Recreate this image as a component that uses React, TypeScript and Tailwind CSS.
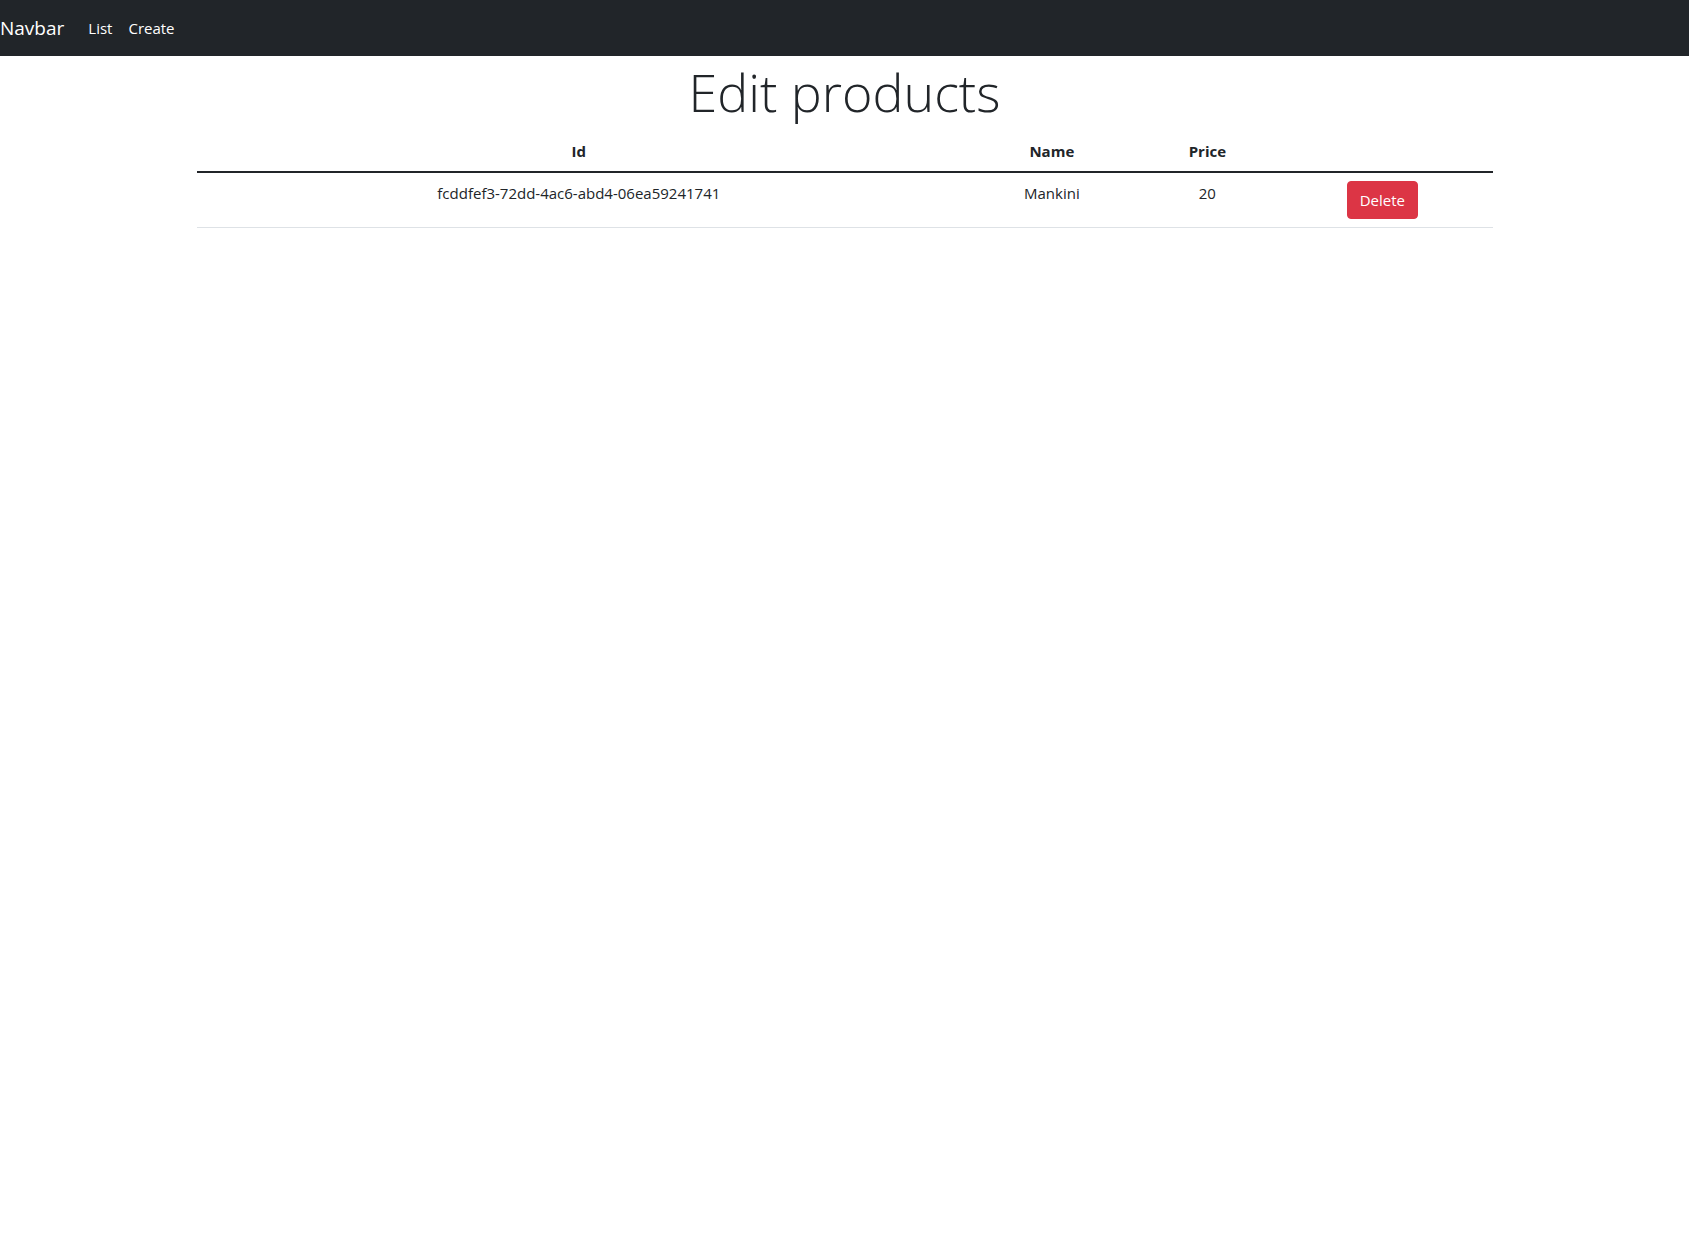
const products = [
  { id: "fcddfef3-72dd-4ac6-abd4-06ea59241741", name: "Mankini", price: 20 },
];

function Navbar() {
  return (
    <nav className="flex h-14 items-center bg-[#212529] text-white">
      <a href="#" className="mr-4 text-[19px] leading-[30px]">
        Navbar
      </a>
      <ul className="flex text-[15px] leading-6">
        <li>
          <a href="#list" className="block p-2">
            List
          </a>
        </li>
        <li>
          <a href="#create" className="block p-2">
            Create
          </a>
        </li>
      </ul>
    </nav>
  );
}

function ProductTable() {
  return (
    <table className="w-full table-fixed border-separate border-spacing-0 text-center align-top text-[15px] leading-6">
      <thead>
        <tr>
          <th className="w-[59%] border-b-2 border-[#212529] p-2">Id</th>
          <th className="w-[14%] border-b-2 border-[#212529] p-2">Name</th>
          <th className="w-[10%] border-b-2 border-[#212529] p-2">Price</th>
          <th className="w-[17%] border-b-2 border-[#212529] p-2" aria-label="Actions" />
        </tr>
      </thead>
      <tbody>
        {products.map((product) => (
          <tr key={product.id} className="align-top">
            <td className="border-b border-[#dee2e6] p-2">{product.id}</td>
            <td className="border-b border-[#dee2e6] p-2">{product.name}</td>
            <td className="border-b border-[#dee2e6] p-2">{product.price}</td>
            <td className="border-b border-[#dee2e6] p-2">
              <button
                type="button"
                className="block mx-auto rounded border border-[#dc3545] bg-[#dc3545] px-3 py-1.5 text-white"
              >
                Delete
              </button>
            </td>
          </tr>
        ))}
      </tbody>
    </table>
  );
}

export default function App() {
  return (
    <div className="min-h-screen bg-white font-['Segoe_UI','Open_Sans','Noto_Sans',sans-serif] text-[#212529]">
      <Navbar />
      <main className="mx-auto max-w-[1320px] px-3 pt-1">
        <h1 className="mb-2 text-center text-[52px] leading-[63px] font-light">Edit products</h1>
        <ProductTable />
      </main>
    </div>
  );
}
